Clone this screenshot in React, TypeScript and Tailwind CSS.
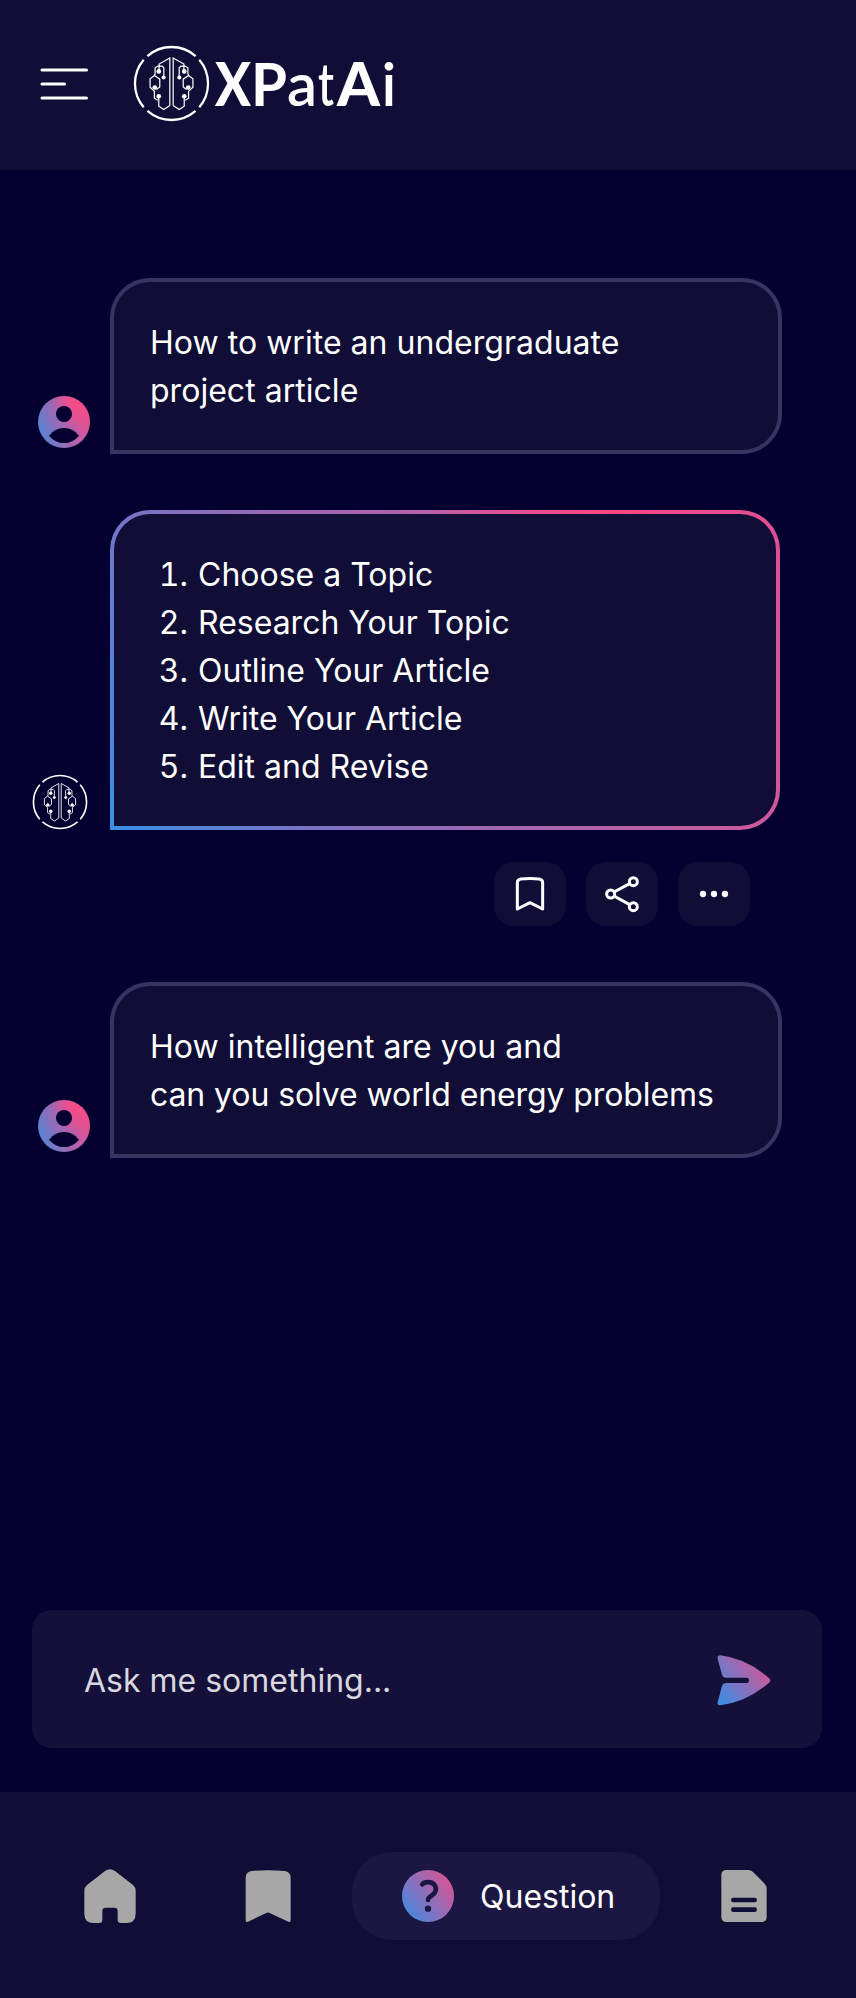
import React from 'react';

function BrainMark({ className }: { className: string }) {
  const half = (
    <>
      <path d="M150 212V70L118 88V106M118 92L106 99V117L104 122M118 94H127L132 99V124" />
      <path d="M104 122L91 132V157L104 169V190L114 196M104 122L120 133V156L110 164" />
      <path d="M117 186V214L132 224L150 212" />
      <g fill="#fff" stroke="none">
        <circle cx="117" cy="110" r="7" />
        <circle cx="131.500" cy="128" r="6" />
        <circle cx="105" cy="158" r="7" />
        <circle cx="117" cy="184" r="7" />
      </g>
    </>
  );
  return (
    <svg className={className} viewBox="40 31 230 230" fill="none" stroke="#fff" strokeWidth="3.600">
      <g strokeWidth="6.800">
        <path d="M83 64A109.500 109.500 0 0 1 227 64" />
        <path d="M83 228A109.500 109.500 0 0 0 227 228" />
        <path d="M72 75A109.500 109.500 0 0 0 72 217" />
        <path d="M238 75A109.500 109.500 0 0 1 238 217" />
      </g>
      {half}
      <g transform="translate(310 0) scale(-1 1)">{half}</g>
    </svg>
  );
}

function Gradients() {
  return (
    <svg className="absolute size-0" aria-hidden="true">
      <defs>
        <linearGradient id="sweep" x1="0" y1="0.75" x2="1" y2="0.35">
          <stop offset="0" stopColor="#4f86da" />
          <stop offset="0.5" stopColor="#a865ae" />
          <stop offset="0.8" stopColor="#d6559a" />
          <stop offset="1" stopColor="#e04f90" />
        </linearGradient>
        <radialGradient id="glow" cx="0.78" cy="0.12" r="0.5">
          <stop offset="0" stopColor="#fb4a86" />
          <stop offset="1" stopColor="#fb4a86" stopOpacity="0" />
        </radialGradient>
        <linearGradient id="soft" x1="0.05" y1="0.85" x2="0.9" y2="0.2">
          <stop offset="0" stopColor="#438ae0" />
          <stop offset="1" stopColor="#d35697" />
        </linearGradient>
      </defs>
    </svg>
  );
}

function UserAvatar() {
  return (
    <svg className="mb-1.5 ml-[38px] size-[52px]" viewBox="54 408 156 156">
      <circle cx="132" cy="486" r="78" fill="url(#sweep)" />
      <circle cx="132" cy="486" r="78" fill="url(#glow)" />
      <g fill="#04002f">
        <circle cx="132" cy="462" r="24" />
        <path d="M87 527Q104 504 132 504Q160 504 177 527Q158 549 132 549Q106 549 87 527Z" />
      </g>
    </svg>
  );
}

function UserMessage({ lines }: { lines: string[] }) {
  return (
    <div className="flex items-end">
      <UserAvatar />
      <div className="ml-5 h-[176px] w-[672px] rounded-[40px] rounded-bl-none border-4 border-[#383360] bg-[#100d36] px-9 pt-[37px]">
        {lines.map((line) => (
          <p key={line} className={line.length > 32 ? 'tracking-[-0.1px] whitespace-nowrap' : 'tracking-[0.03px] whitespace-nowrap'}>
            {line}
          </p>
        ))}
      </div>
    </div>
  );
}

const steps = [
  'Choose a Topic',
  'Research Your Topic',
  'Outline Your Article',
  'Write Your Article',
  'Edit and Revise',
];

function BotMessage() {
  return (
    <div className="flex items-end">
      <BrainMark className="ml-8 size-14" />
      <div className="ml-[22px] h-[320px] w-[670px] rounded-[40px] rounded-bl-none bg-[radial-gradient(ellipse_200px_110px_at_75%_0%,#ff4785_0%,#ff478500_100%),linear-gradient(60deg,#3f8ce3_3%,#7b72c3_24%,#a366b0_47%,#cc5a9e_76%,#da5095_100%)] p-1">
        <ol className="h-full rounded-[36px] rounded-bl-none bg-[#100d36] pt-[37px] pl-9">
          {steps.map((step, i) => (
            <li key={step} className="flex">
              <span className="w-[38px] text-right tabular-nums">{i + 1}.</span>
              <span className="ml-2.5">{step}</span>
            </li>
          ))}
        </ol>
      </div>
    </div>
  );
}

function ActionButton({ label, children }: { label: string; children: React.ReactNode }) {
  return (
    <button aria-label={label} className="h-16 w-[72px] rounded-[20px] bg-[#100d36]">
      <svg className="h-16 w-[72px]" viewBox="0 0 216 192" fill="none" stroke="#fff" strokeWidth="9" strokeLinejoin="round">
        {children}
      </svg>
    </button>
  );
}

export default function App() {
  return (
    <div className="flex h-[1998px] w-[856px] flex-col overflow-hidden bg-[#04002f] font-['Inter',sans-serif] text-[32px] leading-[48px] font-normal text-white">
      <Gradients />
      <header className="flex h-[170px] shrink-0 bg-[#100d36]">
        <button aria-label="Menu" className="mt-[66px] ml-10 h-9 w-12">
          <svg className="h-9 w-12" viewBox="0 0 48 36" stroke="#fff" strokeWidth="3" strokeLinecap="round">
            <path d="M2 4H46.500M2 18H24.500M2 32H46.500" />
          </svg>
        </button>
        <BrainMark className="mt-[45px] ml-[45px] size-[77px]" />
        <svg className="mt-10 ml-[3px] h-[90px] w-[190px]" viewBox="213 40 190 90" fill="#fff" fontFamily="Lato, sans-serif" fontSize="60">
          <text x="215" y="106" fontWeight="900" textLength="36" lengthAdjust="spacingAndGlyphs">X</text>
          <text x="251" y="106" fontWeight="700" textLength="36" lengthAdjust="spacingAndGlyphs">P</text>
          <text x="287" y="106" fontWeight="600" textLength="30" lengthAdjust="spacingAndGlyphs">a</text>
          <text x="318" y="106" fontWeight="600" textLength="16" lengthAdjust="spacingAndGlyphs">t</text>
          <text x="337" y="106" fontWeight="900" textLength="43" lengthAdjust="spacingAndGlyphs">A</text>
          <text x="381.500" y="106" fontWeight="600">i</text>
        </svg>
      </header>

      <main className="flex grow flex-col">
        <div className="mt-[108px]">
          <UserMessage lines={['How to write an undergraduate', 'project article']} />
        </div>
        <div className="mt-14">
          <BotMessage />
        </div>
        <div className="mt-8 ml-[494px] flex gap-5">
          <ActionButton label="Save">
            <path d="M70 141V62Q70 53 80 51Q108 48 136 51Q146 53 146 62V141L108 122Z" />
          </ActionButton>
          <ActionButton label="Share">
            <circle cx="142" cy="59" r="12" />
            <circle cx="74" cy="96" r="12" />
            <circle cx="142" cy="134" r="12" />
            <path d="M84 90L131 65M84 102L131 128" />
          </ActionButton>
          <ActionButton label="More">
            <g fill="#fff" stroke="none">
              <circle cx="75" cy="96" r="9.500" />
              <circle cx="108" cy="96" r="9.500" />
              <circle cx="141" cy="96" r="9.500" />
            </g>
          </ActionButton>
        </div>
        <div className="mt-14">
          <UserMessage lines={['How intelligent are you and', 'can you solve world energy problems']} />
        </div>
      </main>

      <div className="mb-11 ml-8 flex h-[138px] w-[790px] shrink-0 items-center justify-between rounded-[20px] bg-[#14103a] pr-[51px] pl-[52px]">
        <span className="pt-1 text-[#d8d7df]">Ask me something...</span>
        <svg className="mt-0.5 h-[51px] w-[54px]" viewBox="872 194 162 153" fill="url(#soft)">
          <path d="M882 195Q960 204 1028 263Q1036 270 1028 277Q960 336 882 345Q872 345 874 335L887 287Q890 278 899 278H961Q968 278 968 270Q968 262 961 262H899Q890 262 887 253L874 205Q872 195 882 195Z" />
        </svg>
      </div>

      <nav className="h-[206px] shrink-0 bg-[#100d36] pt-[60px]">
        <div className="flex h-[88px] items-center">
          <svg className="ml-[84px] h-[54px] w-[52px]" viewBox="252 836 156 162" fill="#a7a7a7">
            <path d="M315 842Q330 832 345 842L399 884Q407 891 407 901V970Q407 998 379 998H363Q353 998 353 988V962Q353 952 343 952H317Q307 952 307 962V988Q307 998 297 998H281Q253 998 253 970V901Q253 891 261 884Z" />
          </svg>
          <svg className="ml-[109px] h-[52px] w-[46px]" viewBox="735 840 138 156" fill="#a7a7a7">
            <path d="M737 863Q737 846 755 843Q804 838 854 843Q872 846 872 863V991Q872 998 865 995L809 969Q804 966 799 969L744 995Q737 998 737 991Z" />
          </svg>
          <div className="ml-[61px] flex h-[88px] w-[308px] items-center rounded-[40px] bg-[#1b1742] pl-[50px]">
            <svg className="size-[52px]" viewBox="-78 -78 156 156">
              <circle r="78" fill="url(#soft)" />
              <path d="M-17 -35C-11 -43 10 -45 19 -34C28 -22 23 -9 12 -2C4 3 0 5 0 12" fill="none" stroke="#1b1742" strokeWidth="14" strokeLinecap="round" />
              <circle cy="38" r="9.500" fill="#1b1742" />
            </svg>
            <span className="ml-[26px] pt-0.5">Question</span>
          </div>
          <svg className="ml-[61px] h-[52px] w-[46px]" viewBox="885 840 138 156">
            <path d="M901 840H967Q975 840 981 846L1016 881Q1022 887 1022 895V981Q1022 996 1007 996H901Q886 996 886 981V855Q886 840 901 840Z" fill="#a7a7a7" />
            <path d="M922 930H986M922 959H986" stroke="#100d36" strokeWidth="14" strokeLinecap="round" />
          </svg>
        </div>
      </nav>
    </div>
  );
}
